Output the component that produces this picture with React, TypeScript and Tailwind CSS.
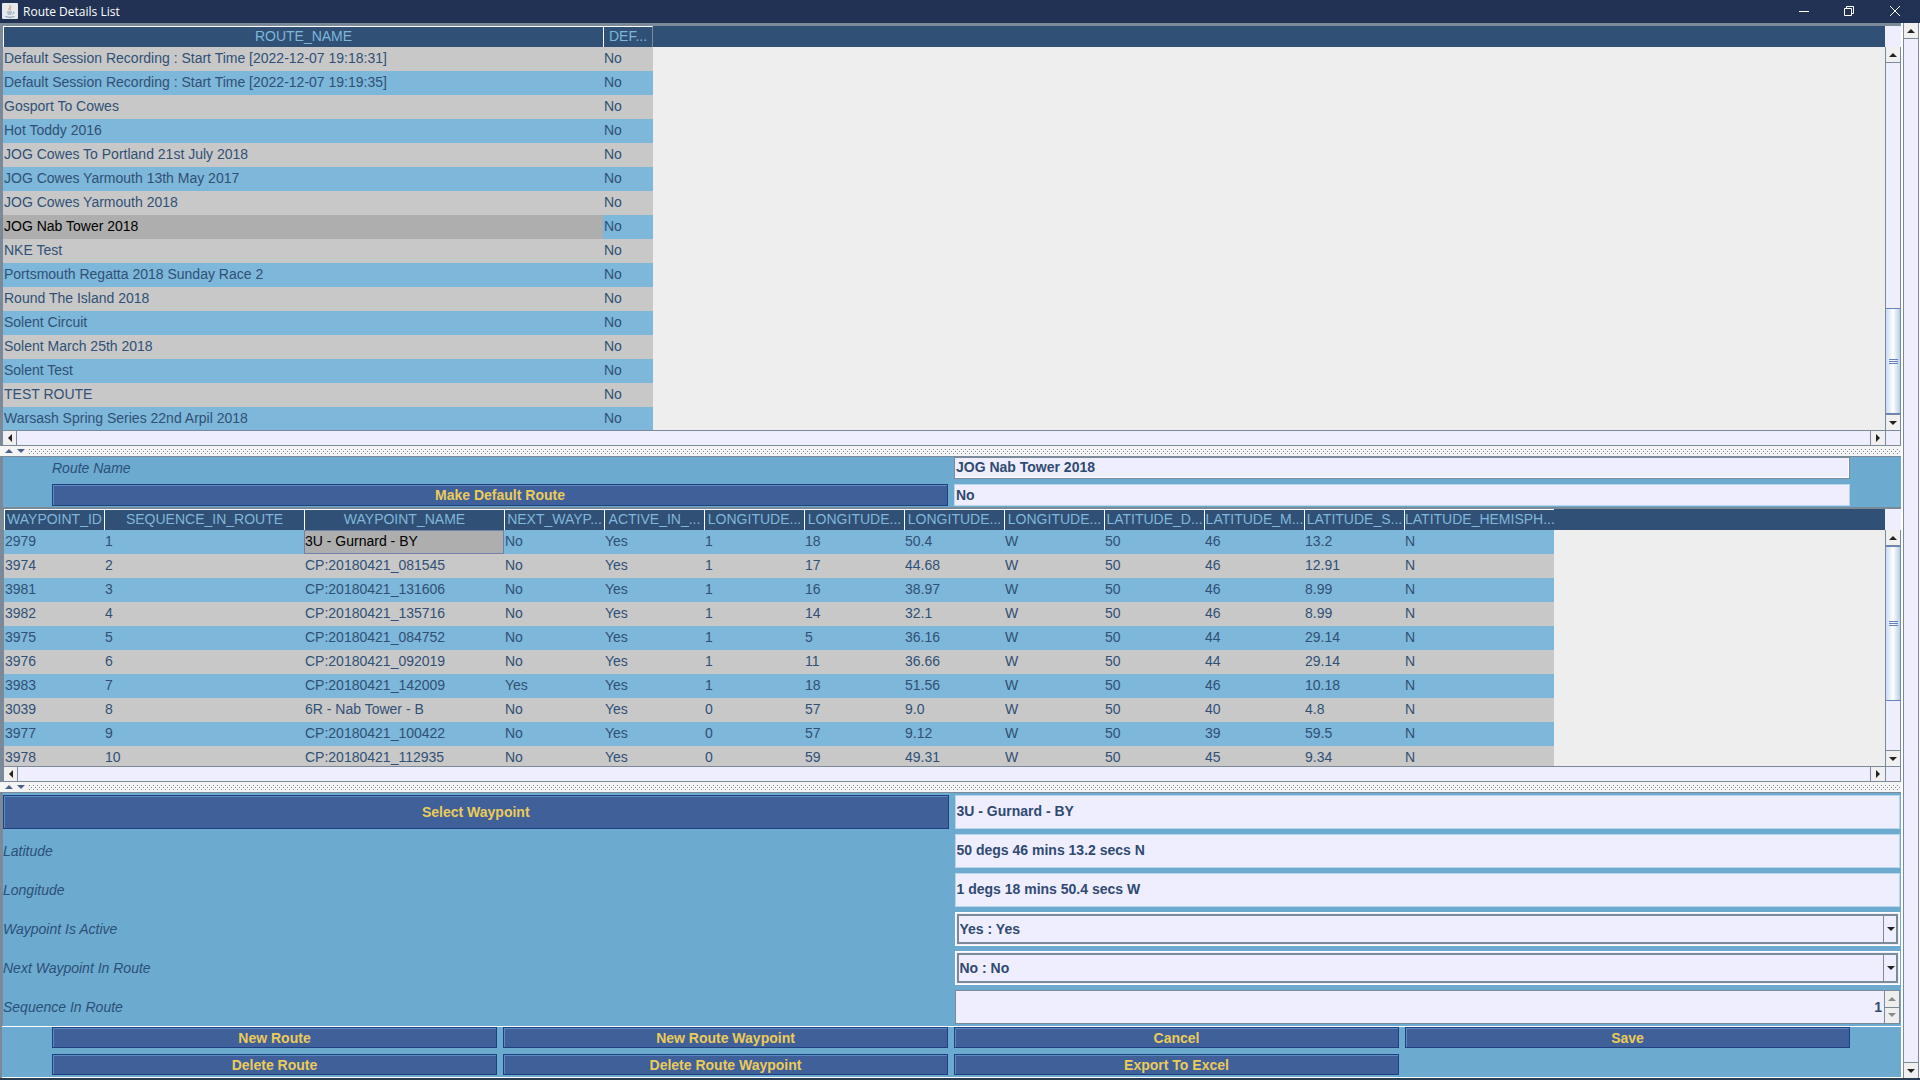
import React, { useId, useState } from 'react';
import clsx from 'clsx';

const routes = [
  'Default Session Recording : Start Time [2022-12-07 19:18:31]',
  'Default Session Recording : Start Time [2022-12-07 19:19:35]',
  'Gosport To Cowes',
  'Hot Toddy 2016',
  'JOG Cowes To Portland 21st July 2018',
  'JOG Cowes Yarmouth 13th May 2017',
  'JOG Cowes Yarmouth 2018',
  'JOG Nab Tower 2018',
  'NKE Test',
  'Portsmouth Regatta 2018 Sunday Race 2',
  'Round The Island 2018',
  'Solent Circuit',
  'Solent March 25th 2018',
  'Solent Test',
  'TEST ROUTE',
  'Warsash Spring Series 22nd Arpil 2018',
];

const waypointColumns = [
  { label: 'WAYPOINT_ID', width: 'w-[100px]' },
  { label: 'SEQUENCE_IN_ROUTE', width: 'w-[200px]' },
  { label: 'WAYPOINT_NAME', width: 'w-[200px]' },
  { label: 'NEXT_WAYP...', width: 'w-[100px]' },
  { label: 'ACTIVE_IN_...', width: 'w-[100px]' },
  { label: 'LONGITUDE...', width: 'w-[100px]' },
  { label: 'LONGITUDE...', width: 'w-[100px]' },
  { label: 'LONGITUDE...', width: 'w-[100px]' },
  { label: 'LONGITUDE...', width: 'w-[100px]' },
  { label: 'LATITUDE_D...', width: 'w-[100px]' },
  { label: 'LATITUDE_M...', width: 'w-[100px]' },
  { label: 'LATITUDE_S...', width: 'w-[100px]' },
  { label: 'LATITUDE_HEMISPH...', width: 'w-[150px]' },
];

const waypoints = [
  ['2979', '1', '3U - Gurnard - BY', 'No', 'Yes', '1', '18', '50.4', 'W', '50', '46', '13.2', 'N'],
  ['3974', '2', 'CP:20180421_081545', 'No', 'Yes', '1', '17', '44.68', 'W', '50', '46', '12.91', 'N'],
  ['3981', '3', 'CP:20180421_131606', 'No', 'Yes', '1', '16', '38.97', 'W', '50', '46', '8.99', 'N'],
  ['3982', '4', 'CP:20180421_135716', 'No', 'Yes', '1', '14', '32.1', 'W', '50', '46', '8.99', 'N'],
  ['3975', '5', 'CP:20180421_084752', 'No', 'Yes', '1', '5', '36.16', 'W', '50', '44', '29.14', 'N'],
  ['3976', '6', 'CP:20180421_092019', 'No', 'Yes', '1', '11', '36.66', 'W', '50', '44', '29.14', 'N'],
  ['3983', '7', 'CP:20180421_142009', 'Yes', 'Yes', '1', '18', '51.56', 'W', '50', '46', '10.18', 'N'],
  ['3039', '8', '6R - Nab Tower - B', 'No', 'Yes', '0', '57', '9.0', 'W', '50', '40', '4.8', 'N'],
  ['3977', '9', 'CP:20180421_100422', 'No', 'Yes', '0', '57', '9.12', 'W', '50', '39', '59.5', 'N'],
  ['3978', '10', 'CP:20180421_112935', 'No', 'Yes', '0', '59', '49.31', 'W', '50', '45', '9.34', 'N'],
];

type Direction = 'up' | 'down' | 'left' | 'right';

const arrowPoints: Record<Direction, string> = {
  up: '5,0 10,5 0,5',
  down: '0,0 10,0 5,5',
  left: '5,0 5,10 0,5',
  right: '0,0 5,5 0,10',
};

const Arrow: React.FC<{ direction: Direction; className?: string }> = ({ direction, className = 'fill-[#222222]' }) => {
  const tall = direction === 'left' || direction === 'right';
  return (
    <svg
      width={tall ? 4 : 8}
      height={tall ? 8 : 4}
      viewBox={tall ? '0 0 5 10' : '0 0 10 5'}
      className={className}
      aria-hidden="true"
    >
      <polygon points={arrowPoints[direction]} />
    </svg>
  );
};

const ScrollButton: React.FC<{ direction: Direction; className?: string }> = ({ direction, className }) => (
  <button
    aria-label={`Scroll ${direction}`}
    className={clsx('flex shrink-0 items-center justify-center bg-[#f0f0f0] border-[#7a8a99]', className)}
  >
    <Arrow direction={direction} />
  </button>
);

const Thumb: React.FC<{ className: string }> = ({ className }) => (
  <div
    className={clsx(
      'flex shrink-0 flex-col items-center justify-center gap-px border-y border-[#6382bf] bg-linear-to-r from-[#c8ddf2] via-white to-[#b8cfe5]',
      className,
    )}
  >
    <span className="h-px w-[9px] bg-[#6382bf]" />
    <span className="h-px w-[9px] bg-[#6382bf]" />
    <span className="h-px w-[9px] bg-[#6382bf]" />
  </div>
);

const VerticalBar: React.FC<{ thumb: React.ReactNode }> = ({ thumb }) => (
  <div className="flex w-4 shrink-0 flex-col border-x border-[#7a8a99] bg-[#eeeeff]">
    <ScrollButton direction="up" className="h-4 border-b" />
    {thumb}
    <ScrollButton direction="down" className="h-4 border-t" />
  </div>
);

const HorizontalBar: React.FC = () => (
  <div className="flex h-4 shrink-0 border-y border-[#7a8a99] bg-[#eeeeff]">
    <ScrollButton direction="left" className="w-[14px] border-r" />
    <div className="grow" />
    <ScrollButton direction="right" className="w-4 border-x" />
    <div className="w-[15px] shrink-0 border-r border-[#7a8a99]" />
  </div>
);

const SplitDivider: React.FC = () => {
  const id = useId();
  return (
    <div className="flex h-[11px] shrink-0 items-center gap-1 border-b border-[#7a8a99] bg-[#f4f4f4] pl-[5px]">
      <button aria-label="Collapse"><Arrow direction="up" className="block fill-[#4a6189]" /></button>
      <button aria-label="Expand"><Arrow direction="down" className="block fill-[#4a6189]" /></button>
      <svg className="h-[5px] min-w-0 grow" aria-hidden="true">
        <pattern id={id} width="4" height="4" patternUnits="userSpaceOnUse">
          <rect x="0" y="0" width="1" height="1" fill="#7d8790" />
          <rect x="2" y="2" width="1" height="1" fill="#7d8790" />
        </pattern>
        <rect width="100%" height="5" fill={`url(#${id})`} />
      </svg>
    </div>
  );
};

const headerCell =
  'h-[21px] border-t border-l border-white bg-[#305075] p-0 pb-[3px] text-center font-normal text-[#7fb7d9] overflow-hidden whitespace-nowrap';

const ActionButton: React.FC<{ children: React.ReactNode; className?: string }> = ({ children, className = 'h-[21px]' }) => (
  <button
    className={clsx(
      'flex items-center justify-center border border-[#1f4080] bg-[#3f6098] font-bold text-[#ebcb5a] shadow-[inset_1px_1px_0_#5d8cc0]',
      className,
    )}
  >
    {children}
  </button>
);

const fieldLabel = 'text-[#2a5078] italic';
const readOnlyField = 'w-full min-w-0 border border-[#b8d5ea] bg-[#eeeeff] px-px font-bold text-[#304a70] outline-none';

const RouteTable: React.FC<{ selected: number; onSelect: (index: number) => void }> = ({ selected, onSelect }) => (
  <section className="flex flex-col border-t-[3px] border-l-[3px] border-[#7a8a99]">
    <div className="flex h-[404px]">
      <div className="min-w-0 grow overflow-hidden bg-[#eeeeee]">
        <div className="bg-[#305075]">
          <table className="w-[650px] table-fixed border-separate border-spacing-0">
            <thead>
              <tr>
                <th className={clsx(headerCell, 'w-[600px]')}>ROUTE_NAME</th>
                <th className={clsx(headerCell, 'w-[50px] border-r border-r-[#7a8a99]')}>DEF...</th>
              </tr>
            </thead>
          </table>
        </div>
        <table className="w-[650px] table-fixed border-separate border-spacing-0">
          <tbody>
            {routes.map((name, index) => (
              <tr
                key={name}
                onClick={() => onSelect(index)}
                className={clsx('h-6 text-[#305075]', index % 2 ? 'bg-[#7db7d9]' : 'bg-[#c8c8c8]')}
              >
                <td className={clsx('w-[600px] px-px pt-0 pb-[2px]', index === selected && 'bg-[#aeaeae] text-black')}>{name}</td>
                <td className="px-px pt-0 pb-[2px]">No</td>
              </tr>
            ))}
          </tbody>
        </table>
      </div>
      <div className="flex flex-col bg-[#eeeeff] pt-[21px]">
        <div className="flex grow">
          <VerticalBar thumb={<><div className="grow" /><Thumb className="h-[106px]" /></>} />
        </div>
      </div>
    </div>
    <HorizontalBar />
  </section>
);

const WaypointTable: React.FC = () => (
  <section className="flex flex-col border-t-2 border-l-4 border-[#7a8a99]">
    <div className="flex h-[257px]">
      <div className="min-w-0 grow overflow-hidden bg-[#eeeeee]">
        <div className="bg-[#305075]">
          <table className="w-[1550px] table-fixed border-separate border-spacing-0">
            <thead>
              <tr>
                {waypointColumns.map((column, index) => (
                  <th key={index} className={clsx(headerCell, column.width)}>{column.label}</th>
                ))}
              </tr>
            </thead>
          </table>
        </div>
        <table className="w-[1550px] table-fixed border-separate border-spacing-0">
          <tbody>
            {waypoints.map((row, rowIndex) => (
              <tr key={row[0]} className={clsx('h-6 text-[#305075]', rowIndex % 2 ? 'bg-[#c8c8c8]' : 'bg-[#7db7d9]')}>
                {row.map((value, index) => (
                  <td
                    key={index}
                    className={clsx(
                      'pt-0 pb-[2px]',
                      waypointColumns[index].width,
                      rowIndex === 0 && index === 2 ? 'border border-[#7080a8] bg-[#aeaeae] text-black' : 'px-px',
                    )}
                  >
                    {value}
                  </td>
                ))}
              </tr>
            ))}
          </tbody>
        </table>
      </div>
      <div className="flex flex-col bg-[#eeeeff] pt-[21px]">
        <div className="flex grow">
          <VerticalBar thumb={<><Thumb className="h-[155px]" /><div className="grow" /></>} />
        </div>
      </div>
    </div>
    <HorizontalBar />
  </section>
);

const ComboBox: React.FC<{ id: string; value: string }> = ({ id, value }) => (
  <div className="relative h-[34px] border border-white bg-[#eeeeff] p-px">
    <select
      id={id}
      defaultValue={value}
      className="h-full w-full appearance-none border-2 border-[#7a8a99] bg-[#eeeeff] px-px font-bold text-[#304a70] outline-none"
    >
      <option>{value}</option>
    </select>
    <span className="pointer-events-none absolute inset-y-[2px] right-[2px] flex w-[14px] items-center justify-center border-l border-[#7a8a99]">
      <Arrow direction="down" />
    </span>
  </div>
);

const App: React.FC = () => {
  const [selected, setSelected] = useState(7);

  return (
    <div className="flex min-h-screen flex-col border-b-2 border-[#2b3d52] bg-white font-['Liberation_Sans',Arial,sans-serif] text-[14px] leading-4">
      <header className="flex h-[23px] shrink-0 items-center bg-[#213254] pr-[2px] pb-[2px] pl-[2px] text-white">
        <svg width="16" height="16" viewBox="0 0 16 16" aria-hidden="true">
          <rect width="16" height="16" rx="1" fill="#e6eaed" />
          <path d="M7.5 2c2 2-2 3 0 5M9.5 4c-2 1-1 2-1 3.500" stroke="#dc9468" fill="none" />
          <path d="M5 9h5M5.500 11h4M11 9c1.500 0 1 1.500-.5 2" stroke="#7c96b0" fill="none" />
          <path d="M3.500 13.500c2 1 7 1 9 0" stroke="#7c96b0" fill="none" />
        </svg>
        <h1 className="grow pt-[2px] pl-[5px] font-['Open_Sans','Noto_Sans',sans-serif] text-[12px]">Route Details List</h1>
        <button aria-label="Minimise" className="flex w-[45px] justify-center">
          <svg width="10" height="10" stroke="white" fill="none"><path d="M0 5.5h10" /></svg>
        </button>
        <button aria-label="Restore" className="flex w-[45px] justify-center">
          <svg width="10" height="10" stroke="white" fill="none"><path d="M.5 2.5h7v7h-7zM2.5 2.5v-2h7v7h-2" /></svg>
        </button>
        <button aria-label="Close" className="flex w-[47px] justify-center">
          <svg width="10" height="10" stroke="white" fill="none"><path d="M0 0l10 10M10 0L0 10" /></svg>
        </button>
      </header>

      <div className="flex grow pr-px">
        <main className="min-w-0 grow border-r-2 border-white bg-[#6daad0]">
          <RouteTable selected={selected} onSelect={setSelected} />
          <SplitDivider />

          <section className="grid grid-cols-2 gap-x-[6px] gap-y-[5px] border-l-[3px] border-[#7a8a99] pr-[51px] pb-px pl-[49px]">
            <label htmlFor="route-name" className={clsx(fieldLabel, 'self-center')}>Route Name</label>
            <input
              id="route-name"
              key={selected}
              defaultValue={routes[selected]}
              className="h-[22px] w-full min-w-0 border border-[#7a8a99] bg-[#eeeeff] px-px pb-[2px] font-bold text-[#304a70] shadow-[inset_-1px_-1px_0_white] outline-none"
            />
            <ActionButton className="h-[22px]">Make Default Route</ActionButton>
            <input aria-label="Default route" readOnly value="No" className={clsx(readOnlyField, 'h-[22px] pb-px')} />
          </section>

          <WaypointTable />
          <SplitDivider />

          <section className="grid grid-cols-2 gap-x-[6px] gap-y-[5px] border-l-[3px] border-[#7a8a99] pt-[2px] pr-px pb-[2px]">
            <ActionButton className="h-[34px]">Select Waypoint</ActionButton>
            <input aria-label="Waypoint" readOnly value="3U - Gurnard - BY" className={clsx(readOnlyField, 'h-[34px] pb-[2px]')} />
            <label htmlFor="latitude" className={clsx(fieldLabel, 'self-center')}>Latitude</label>
            <input id="latitude" readOnly value="50 degs 46 mins 13.2 secs N" className={clsx(readOnlyField, 'h-[34px] pb-[2px]')} />
            <label htmlFor="longitude" className={clsx(fieldLabel, 'self-center')}>Longitude</label>
            <input id="longitude" readOnly value="1 degs 18 mins 50.4 secs W" className={clsx(readOnlyField, 'h-[34px] pb-[2px]')} />
            <label htmlFor="active" className={clsx(fieldLabel, 'self-center')}>Waypoint Is Active</label>
            <ComboBox id="active" value="Yes : Yes" />
            <label htmlFor="next" className={clsx(fieldLabel, 'self-center')}>Next Waypoint In Route</label>
            <ComboBox id="next" value="No : No" />
            <label htmlFor="sequence" className={clsx(fieldLabel, 'self-center')}>Sequence In Route</label>
            <div className="flex h-[34px] border border-[#7a8a99] bg-[#eeeeff]">
              <input id="sequence" defaultValue="1" className="min-w-0 grow px-[2px] text-right font-bold text-[#304a70] outline-none" />
              <div className="flex w-[15px] flex-col border-l border-[#7a8a99] bg-[#eeeeee]">
                <button aria-label="Increase" className="flex grow items-center justify-center border-b border-[#7a8a99]">
                  <Arrow direction="up" className="fill-[#8a8a8a]" />
                </button>
                <button aria-label="Decrease" className="flex grow items-center justify-center">
                  <Arrow direction="down" className="fill-[#8a8a8a]" />
                </button>
              </div>
            </div>
          </section>

          <footer className="border-l-2 border-[#7a8a99]">
            <div className="grid grid-cols-4 gap-x-[6px] gap-y-[6px] border-y border-white pr-[51px] pb-[2px] pl-[50px]">
              <ActionButton>New Route</ActionButton>
              <ActionButton>New Route Waypoint</ActionButton>
              <ActionButton>Cancel</ActionButton>
              <ActionButton>Save</ActionButton>
              <ActionButton>Delete Route</ActionButton>
              <ActionButton>Delete Route Waypoint</ActionButton>
              <ActionButton>Export To Excel</ActionButton>
            </div>
          </footer>
        </main>
        <VerticalBar thumb={<div className="grow" />} />
      </div>
    </div>
  );
};

export default App;
